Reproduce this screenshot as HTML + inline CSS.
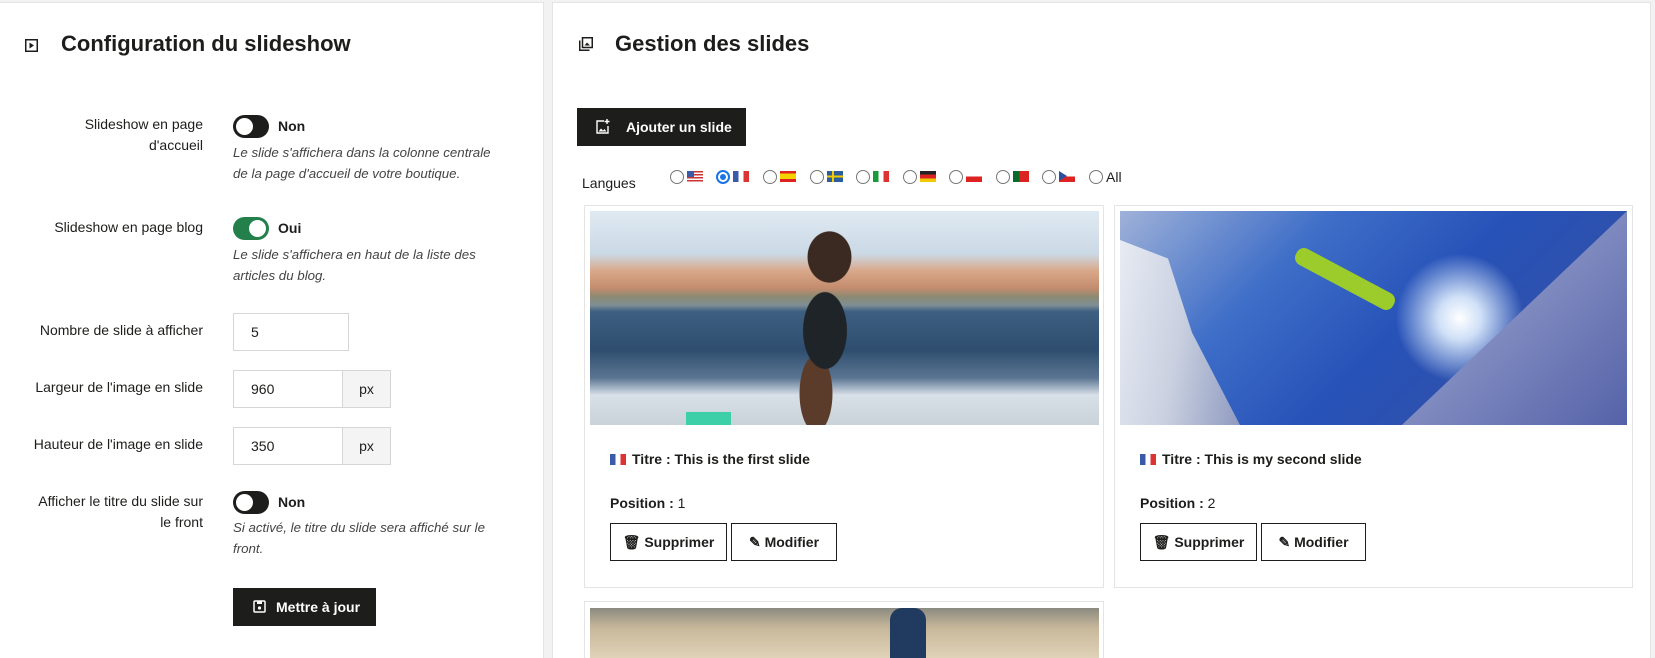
<!DOCTYPE html>
<html style="height:658px;overflow:hidden"><head><meta charset="utf-8"><style>
*{box-sizing:border-box;margin:0;padding:0}
html,body{width:1655px;height:658px;overflow:hidden}
body{background:#f2f2f2;font-family:"Liberation Sans",sans-serif;color:#1d1d1b;position:relative}
.a{position:absolute}
.panel{position:absolute;background:#fff;border:1px solid #e4e4e4;border-bottom:none}
h2{position:absolute;font-size:22px;font-weight:bold;color:#1d1d1b}
.lbl{position:absolute;font-size:14px;text-align:right;line-height:21px;width:190px}
.help{position:absolute;font-size:13.3px;font-style:italic;color:#444;line-height:21px;width:260px}
.tog{position:absolute;width:36px;height:23px;border-radius:12px;background:#1d1d1b}
.tog::after{content:"";position:absolute;top:3px;left:3px;width:17px;height:17px;border-radius:50%;background:#fff}
.tog.on{background:#23804b}
.tog.on::after{left:16px}
.tv{position:absolute;font-size:14px;font-weight:bold}
.inp{position:absolute;border:1px solid #d6d6d6;height:38px;font-size:14px;padding:10px 17px;background:#fff}
.add{position:absolute;border:1px solid #d6d6d6;height:38px;width:49px;background:#f4f4f4;font-size:14px;text-align:center;line-height:36px}
.btn{position:absolute;background:#1d1d1b;color:#fff;font-weight:bold;font-size:14px}
.card{position:absolute;border:1px solid #e4e4e4;background:#fff}
.ob{position:absolute;border:1px solid #1d1d1b;height:38px;font-size:14px;font-weight:bold;line-height:36px;text-align:center;background:#fff}
.rad{position:absolute;width:14px;height:14px;border:1px solid #777;border-radius:50%;background:#fff}
.rad.sel{border:2px solid #1a73e8}
.rad.sel::after{content:"";position:absolute;left:2px;top:2px;width:6px;height:6px;border-radius:50%;background:#1a73e8}
.flag{position:absolute;width:16px;height:11px}
.ct{position:absolute;font-size:14px;font-weight:bold}
</style></head><body>

<div class="panel" style="left:-1px;top:2px;width:545px;height:656px"></div>
<div class="panel" style="left:552px;top:2px;width:1099px;height:656px"></div>

<!-- left -->
<svg class="a" style="left:25px;top:39px" width="13" height="13" viewBox="0 0 13 13"><rect x="0.75" y="0.75" width="11.5" height="11.5" fill="none" stroke="#1d1d1b" stroke-width="1.5"/><path d="M4.5 3.5 L9 6.5 L4.5 9.5Z" fill="#1d1d1b"/></svg>
<h2 style="left:61px;top:31px">Configuration du slideshow</h2>

<div class="lbl" style="left:13px;top:114px">Slideshow en page<br>d'accueil</div>
<div class="tog" style="left:233px;top:115px"></div><div class="tv" style="left:278px;top:118px">Non</div>
<div class="help" style="left:233px;top:142px">Le slide s'affichera dans la colonne centrale de la page d'accueil de votre boutique.</div>

<div class="lbl" style="left:13px;top:217px">Slideshow en page blog</div>
<div class="tog on" style="left:233px;top:217px"></div><div class="tv" style="left:278px;top:220px">Oui</div>
<div class="help" style="left:233px;top:244px">Le slide s'affichera en haut de la liste des articles du blog.</div>

<div class="lbl" style="left:13px;top:320px">Nombre de slide à afficher</div>
<div class="inp" style="left:233px;top:313px;width:116px">5</div>

<div class="lbl" style="left:13px;top:377px">Largeur de l'image en slide</div>
<div class="inp" style="left:233px;top:370px;width:110px">960</div><div class="add" style="left:342px;top:370px">px</div>

<div class="lbl" style="left:13px;top:434px">Hauteur de l'image en slide</div>
<div class="inp" style="left:233px;top:427px;width:110px">350</div><div class="add" style="left:342px;top:427px">px</div>

<div class="lbl" style="left:13px;top:491px">Afficher le titre du slide sur<br>le front</div>
<div class="tog" style="left:233px;top:491px"></div><div class="tv" style="left:278px;top:494px">Non</div>
<div class="help" style="left:233px;top:517px">Si activé, le titre du slide sera affiché sur le front.</div>

<div class="btn" style="left:233px;top:588px;width:143px;height:38px;line-height:38px;padding-left:43px">Mettre à jour</div>
<svg class="a" style="left:253px;top:600px" width="13" height="13" viewBox="0 0 13 13"><rect x="1" y="1" width="11" height="11" rx="1" fill="none" stroke="#fff" stroke-width="1.5"/><rect x="4" y="1" width="5" height="3" fill="#fff"/><circle cx="6.5" cy="8" r="1.6" fill="#fff"/></svg>

<!-- right -->
<svg class="a" style="left:579px;top:37px" width="14" height="14" viewBox="0 0 14 14"><rect x="3.5" y="0.75" width="9.75" height="9.75" fill="none" stroke="#1d1d1b" stroke-width="1.5"/><path d="M0.75 3.5V13.25H10.5" fill="none" stroke="#1d1d1b" stroke-width="1.5"/><path d="M5.5 8.5L8 5.5L11 8.5Z" fill="#1d1d1b"/></svg>
<h2 style="left:615px;top:31px">Gestion des slides</h2>

<div class="btn" style="left:577px;top:108px;width:169px;height:38px;line-height:38px;padding-left:49px">Ajouter un slide</div>
<svg class="a" style="left:596px;top:119px" width="14" height="15" viewBox="0 0 14 15"><path d="M8 2H1V14H12V7" fill="none" stroke="#fff" stroke-width="1.4"/><path d="M11 0V5M8.5 2.5H13.5" stroke="#fff" stroke-width="1.4"/><path d="M2.5 12.5L5 9.5L7 11.5L8.5 10L10.5 12.5Z" fill="#fff"/></svg>

<div class="a" style="left:582px;top:175px;font-size:14px">Langues</div>
<div class="rad" style="left:670px;top:170px"></div>
<div class="flag" style="left:687px;top:171px;background:repeating-linear-gradient(#c33 0 1.5px,#fff 1.5px 3px)"><div style="width:7px;height:6px;background:#3b5ba9"></div></div>
<div class="rad sel" style="left:716px;top:170px"></div>
<div class="flag" style="left:733px;top:171px;background:linear-gradient(90deg,#3b5ba9 33%,#fff 33% 66%,#d33 66%)"></div>
<div class="rad" style="left:763px;top:170px"></div>
<div class="flag" style="left:780px;top:171px;background:linear-gradient(#d22 25%,#f3d200 25% 75%,#d22 75%)"></div>
<div class="rad" style="left:810px;top:170px"></div>
<div class="flag" style="left:827px;top:171px;background:linear-gradient(#2b5d9c 40%,#f3c900 40% 60%,#2b5d9c 60%)"><div style="position:absolute;left:5px;width:2px;height:11px;background:#f3c900"></div></div>
<div class="rad" style="left:856px;top:170px"></div>
<div class="flag" style="left:873px;top:171px;background:linear-gradient(90deg,#1a9a3a 33%,#fff 33% 66%,#d33 66%)"></div>
<div class="rad" style="left:903px;top:170px"></div>
<div class="flag" style="left:920px;top:171px;background:linear-gradient(#222 33%,#d22 33% 66%,#f3c900 66%)"></div>
<div class="rad" style="left:949px;top:170px"></div>
<div class="flag" style="left:966px;top:171px;background:linear-gradient(#fff 50%,#d22 50%)"></div>
<div class="rad" style="left:996px;top:170px"></div>
<div class="flag" style="left:1013px;top:171px;background:linear-gradient(90deg,#0a6a2a 40%,#d22 40%)"></div>
<div class="rad" style="left:1042px;top:170px"></div>
<div class="flag" style="left:1059px;top:171px;background:linear-gradient(#fff 50%,#d22 50%)"><div style="width:0;height:0;border-top:5.5px solid transparent;border-bottom:5.5px solid transparent;border-left:8px solid #2b4fa0"></div></div>
<div class="rad" style="left:1089px;top:170px"></div>
<div class="a" style="left:1106px;top:169px;font-size:14px">All</div>

<!-- card 1 -->
<div class="card" style="left:584px;top:205px;width:520px;height:383px"></div>
<div class="a" style="left:590px;top:211px;width:509px;height:214px;background:linear-gradient(#dfe9f1 0%,#cbd9e6 20%,#d9a88a 28%,#c48c6e 36%,#8b8a72 40%,#7f8e95 44%,#3d5f80 47%,#2f4e6f 65%,#5a7592 78%,#d8e0e8 86%,#c9d2d8 100%)"></div>
<div class="a" style="left:780px;top:215px;width:90px;height:210px;background:radial-gradient(ellipse 40% 20% at 55% 20%,#3a2a22 60%,transparent 62%),radial-gradient(ellipse 40% 30% at 50% 55%,#1f2428 60%,transparent 62%),radial-gradient(ellipse 30% 30% at 40% 85%,#5b3b2a 60%,transparent 62%)"></div>
<div class="a" style="left:686px;top:412px;width:45px;height:13px;background:#3ccfa8"></div>
<div class="flag" style="left:610px;top:454px;background:linear-gradient(90deg,#3b5ba9 33%,#fff 33% 66%,#d33 66%)"></div>
<div class="ct" style="left:632px;top:451px">Titre : This is the first slide</div>
<div class="ct" style="left:610px;top:495px">Position : <span style="font-weight:normal">1</span></div>
<div class="ob" style="left:610px;top:523px;width:117px">🗑 Supprimer</div>
<div class="ob" style="left:731px;top:523px;width:106px">✎ Modifier</div>

<!-- card 2 -->
<div class="card" style="left:1114px;top:205px;width:519px;height:383px"></div>
<div class="a" style="left:1120px;top:211px;width:507px;height:214px;background:radial-gradient(circle at 67% 50%,#fff 0%,#cfe0f7 6%,transparent 18%),linear-gradient(135deg,#9fb1d8 0%,#3e6ec8 30%,#2752b8 55%,#3050a8 80%,#2e3f8e 100%)"></div>
<div class="a" style="left:1120px;top:240px;width:120px;height:185px;background:linear-gradient(100deg,#e7ebf3 0%,#c9d0e0 50%,#8f9ac0 100%);clip-path:polygon(0 0,40% 10%,60% 50%,100% 100%,0 100%)"></div>
<div class="a" style="left:1390px;top:211px;width:237px;height:214px;background:linear-gradient(135deg,#aab4d8,#5562a8);clip-path:polygon(100% 0,100% 100%,5% 100%)"></div>
<div class="a" style="left:1290px;top:270px;width:110px;height:18px;background:#9ccc2c;transform:rotate(28deg);border-radius:8px"></div>
<div class="flag" style="left:1140px;top:454px;background:linear-gradient(90deg,#3b5ba9 33%,#fff 33% 66%,#d33 66%)"></div>
<div class="ct" style="left:1162px;top:451px">Titre : This is my second slide</div>
<div class="ct" style="left:1140px;top:495px">Position : <span style="font-weight:normal">2</span></div>
<div class="ob" style="left:1140px;top:523px;width:117px">🗑 Supprimer</div>
<div class="ob" style="left:1261px;top:523px;width:105px">✎ Modifier</div>

<!-- card 3 -->
<div class="card" style="left:584px;top:601px;width:520px;height:57px;border-bottom:none"></div>
<div class="a" style="left:590px;top:608px;width:509px;height:50px;background:linear-gradient(#8a8a80,#c8b89a 40%,#e0d2b8)"></div>
<div class="a" style="left:890px;top:608px;width:36px;height:50px;background:#203a60;border-radius:12px 12px 0 0"></div>
</body></html>
